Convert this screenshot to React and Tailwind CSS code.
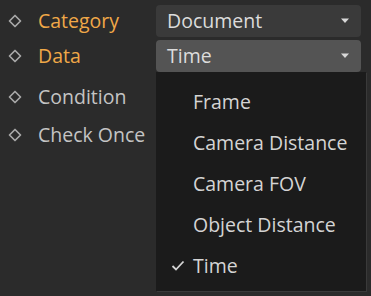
import React from 'react';

function Diamond() {
  return (
    <svg width="14" height="14" viewBox="0 0 14 14" className="shrink-0">
      <path d="M7 1.5 L12.5 7 L7 12.5 L1.5 7 Z" fill="none" stroke="#a8a8a8" strokeWidth="1.7" strokeLinejoin="round" />
    </svg>
  );
}

function Caret() {
  return (
    <svg width="10" height="6" viewBox="0 0 10 6">
      <path d="M1 0.5 L9 0.5 L5 5 Z" fill="#d8d8d8" />
    </svg>
  );
}

function Label({ text, active }) {
  return (
    <div className="flex items-center w-[156px] pl-[8px] gap-[16px]">
      <Diamond />
      <span className={active ? 'text-[#f0a848]' : 'text-[#c4c4c4]'}>{text}</span>
    </div>
  );
}

function Select({ value, open }) {
  return (
    <div
      className={`flex items-center justify-between w-[205px] h-[32px] pl-[11px] pr-[11px] rounded-[4px] text-[#dcdcdc] ${
        open ? 'bg-[#545454]' : 'bg-[#3a3a3a]'
      }`}
    >
      <span>{value}</span>
      <Caret />
    </div>
  );
}

const items = ['Frame', 'Camera Distance', 'Camera FOV', 'Object Distance', 'Time'];

export default function App() {
  return (
    <div
      className="relative w-[371px] h-[296px] bg-[#2b2b2b] pt-[5px] text-[19.5px] leading-none overflow-hidden"
      style={{ fontFamily: '"Open Sans", sans-serif' }}
    >
      <div className="flex items-center h-[32px]">
        <Label text="Category" active />
        <Select value="Document" />
      </div>
      <div className="flex items-center h-[32px] mt-[3px]">
        <Label text="Data" active />
        <Select value="Time" open />
      </div>
      <div className="flex items-center h-[38px] mt-[6px]">
        <Label text="Condition" />
      </div>
      <div className="flex items-center h-[38px]">
        <Label text="Check Once" />
      </div>

      <div className="absolute left-[156px] top-[72px] w-[210px] h-[219px] bg-[#1b1b1b] pt-[9px] shadow-[1px_1px_0_#3a3a3a]">
        {items.map((it) => (
          <div key={it} className="flex items-center h-[41px] text-[#d4d4d4]">
            <div className="w-[37px] flex justify-end pr-[8px]">
              {it === 'Time' && (
                <svg width="14" height="11" viewBox="0 0 14 11">
                  <path d="M1.5 6 L5 9.5 L12.5 1.5" fill="none" stroke="#d4d4d4" strokeWidth="1.8" />
                </svg>
              )}
            </div>
            <span>{it}</span>
          </div>
        ))}
      </div>
    </div>
  );
}
